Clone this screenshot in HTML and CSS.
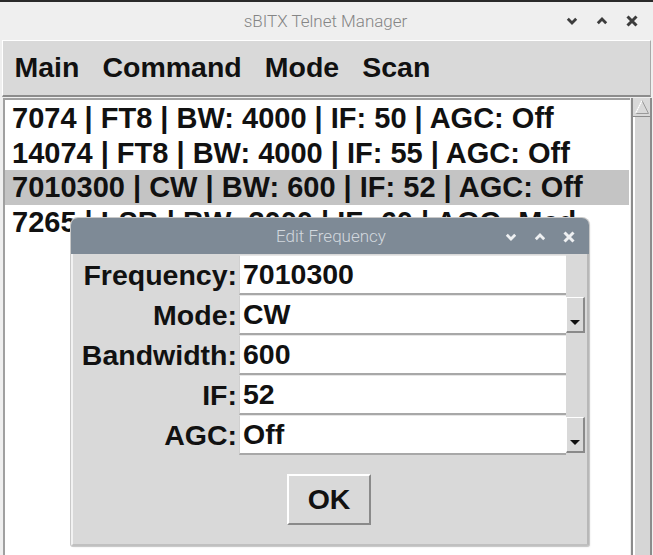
FILE: index.html
```html
<!DOCTYPE html>
<html>
<head>
<meta charset="utf-8">
<link rel="stylesheet" href="styles.css">
</head>
<body>
<div class="win">
  <div class="titlebar">
    <span class="title">sBITX Telnet Manager</span>
    <div class="ctrls">
      <svg class="ic" width="12" height="12" viewBox="0 0 12 12"><path d="M1.8 3.8 L6 8 L10.2 3.8" fill="none" stroke="currentColor" stroke-width="2.8"/></svg>
      <svg class="ic" width="12" height="12" viewBox="0 0 12 12"><path d="M1.8 8.2 L6 4 L10.2 8.2" fill="none" stroke="currentColor" stroke-width="2.8"/></svg>
      <svg class="ic" width="12" height="12" viewBox="0 0 12 12"><path d="M1.5 1.5 L10.5 10.5 M10.5 1.5 L1.5 10.5" fill="none" stroke="currentColor" stroke-width="3"/></svg>
    </div>
  </div>
  <div class="menubar">
    <span class="menu">Main</span>
    <span class="menu">Command</span>
    <span class="menu">Mode</span>
    <span class="menu">Scan</span>
  </div>
  <div class="content">
    <div class="listbox">
      <div class="row">7074 | FT8 | BW: 4000 | IF: 50 | AGC: Off</div>
      <div class="row">14074 | FT8 | BW: 4000 | IF: 55 | AGC: Off</div>
      <div class="row sel">7010300 | CW | BW: 600 | IF: 52 | AGC: Off</div>
      <div class="row">7265 | LSB | BW: 3000 | IF: 60 | AGC: Med</div>
    </div>
    <div class="scrollbar">
      <div class="sb-up">
        <svg width="16" height="16" viewBox="0 0 16 16"><path d="M8 1.5 L14.5 14.5 L1.5 14.5 Z" fill="#d9d9d9" stroke="#9a9a9a" stroke-width="1"/><path d="M8 1.5 L1.5 14.5" stroke="#ffffff" stroke-width="1.2"/></svg>
      </div>
      <div class="sb-trough"></div>
    </div>
  </div>

  <div class="dialog">
    <div class="dtitle">
      <span class="dtitle-text">Edit Frequency</span>
      <div class="ctrls dctrls">
        <svg class="ic" width="12" height="12" viewBox="0 0 12 12"><path d="M1.8 3.8 L6 8 L10.2 3.8" fill="none" stroke="currentColor" stroke-width="2.8"/></svg>
        <svg class="ic" width="12" height="12" viewBox="0 0 12 12"><path d="M1.8 8.2 L6 4 L10.2 8.2" fill="none" stroke="currentColor" stroke-width="2.8"/></svg>
        <svg class="ic" width="12" height="12" viewBox="0 0 12 12"><path d="M1.5 1.5 L10.5 10.5 M10.5 1.5 L1.5 10.5" fill="none" stroke="currentColor" stroke-width="3"/></svg>
      </div>
    </div>
    <div class="dbody">
      <div class="form">
        <label class="lbl">Frequency:</label>
        <div class="field"><div class="entry">7010300</div></div>
        <label class="lbl">Mode:</label>
        <div class="field combo"><div class="entry">CW</div><div class="cbtn"><span class="tri"></span></div></div>
        <label class="lbl">Bandwidth:</label>
        <div class="field"><div class="entry">600</div></div>
        <label class="lbl">IF:</label>
        <div class="field"><div class="entry">52</div></div>
        <label class="lbl">AGC:</label>
        <div class="field combo"><div class="entry">Off</div><div class="cbtn"><span class="tri"></span></div></div>
      </div>
      <div class="btnrow"><button class="ok">OK</button></div>
    </div>
  </div>
</div>
</body>
</html>
```

FILE: styles.css
```css
* { box-sizing: border-box; }
html, body { margin: 0; padding: 0; }
body {
  width: 653px;
  height: 555px;
  overflow: hidden;
  background: #ffffff;
  font-family: "Liberation Sans", Arial, sans-serif;
}
.win {
  position: relative;
  width: 653px;
  height: 555px;
  background: #efefef;
  border-top: 2px solid #2a2a2a;
  display: flex;
  flex-direction: column;
}
.titlebar {
  height: 38px;
  flex: none;
  display: flex;
  align-items: center;
  justify-content: center;
  position: relative;
  background: #efefef;
}
.title {
  font-family: Roboto, "Liberation Sans", sans-serif;
  font-weight: 300;
  font-size: 17px;
  color: #858585;
  margin-left: -2px;
}
.ctrls {
  position: absolute;
  right: 15px;
  top: 13px;
  display: flex;
  gap: 18px;
  color: #3c3c3c;
}
.ic { display: block; }
.menubar {
  height: 57px;
  flex: none;
  margin: 0 2px 0 2px;
  background: #d9d9d9;
  border-top: 1px solid #ffffff;
  border-left: 1px solid #ffffff;
  border-bottom: 2px solid #8c8c8c;
  border-right: 1px solid #a8a8a8;
  display: flex;
  align-items: center;
  padding-left: 0;
  padding-bottom: 2px;
}
.menu {
  font-weight: bold;
  font-size: 28.5px;
  color: #111;
  padding: 0 11.5px;
}
.content {
  flex: 1;
  display: flex;
  margin-left: 3px;
  margin-top: 1px;
  min-height: 0;
}
.listbox {
  width: 627px;
  flex: none;
  background: #ffffff;
  border-left: 2px solid #a0a0a0;
  border-top: 2px solid #a0a0a0;
  padding-top: 1px;
  padding-left: 0;
  overflow: hidden;
}
.row {
  height: 34.5px;
  line-height: 34.5px;
  font-weight: bold;
  font-size: 29px;
  color: #111;
  padding-left: 7px;
  white-space: nowrap;
  margin-right: 1px;
}
.row.sel { background: #c4c4c4; }
.scrollbar {
  width: 21px;
  flex: none;
  margin-left: 1px;
  display: flex;
  flex-direction: column;
  border-left: 2px solid #8c8c8c;
  border-right: 2px solid #8c8c8c;
  background: #d9d9d9;
}
.sb-up {
  height: 19px;
  display: flex;
  align-items: center;
  justify-content: center;
  border-bottom: 1px solid #8c8c8c;
  background: #d9d9d9;
}
.sb-trough {
  flex: 1;
  border-left: 2px solid #ffffff;
  background: #d6d6d6;
}

/* dialog */
.dialog {
  position: absolute;
  left: 71px;
  top: 216px;
  width: 518px;
  height: 328px;
  display: flex;
  flex-direction: column;
  border-radius: 7px 7px 2px 2px;
  background: #d9d9d9;
  box-shadow: 0 0 0 1px #c9c9c9, 1px 1px 2px rgba(0,0,0,0.12);
  overflow: hidden;
}
.dtitle {
  height: 36px;
  flex: none;
  background: #7e8a96;
  display: flex;
  align-items: center;
  justify-content: center;
  position: relative;
}
.dtitle-text {
  font-family: Roboto, "Liberation Sans", sans-serif;
  font-weight: 300;
  font-size: 17px;
  color: #d2d8de;
  margin-left: 2px;
}
.dctrls {
  right: 14px;
  top: 13px;
  gap: 17px;
  color: #eef0f2;
}
.dbody {
  flex: 1;
  border-left: 2px solid #f2f2f2;
  border-bottom: 2px solid #c0c0c0;
  border-right: 2px solid #b8b8b8;
  display: flex;
  flex-direction: column;
  padding-top: 1px;
}
.form {
  display: grid;
  grid-template-columns: 166px 346px;
  grid-auto-rows: 40px;
}
.lbl {
  font-weight: bold;
  font-size: 28.5px;
  color: #111;
  text-align: right;
  line-height: 40px;
  padding-right: 2px;
}
.field {
  display: flex;
  height: 40px;
  padding-right: 19px;
}
.field.combo { padding-right: 0; }
.entry {
  flex: 1;
  background: #ffffff;
  border-top: 1px solid #e6e6e6;
  border-left: 1px solid #d0d0d0;
  border-bottom: 2px solid #a8a8a8;
  font-weight: bold;
  font-size: 28.5px;
  line-height: 37px;
  color: #111;
  padding-left: 3px;
}
.cbtn {
  width: 19px;
  flex: none;
  margin: 2px 0 2px 0;
  background: #d9d9d9;
  border-top: 1px solid #ffffff;
  border-left: 1px solid #ffffff;
  border-right: 2px solid #8a8a8a;
  border-bottom: 2px solid #8a8a8a;
  display: flex;
  align-items: flex-end;
  justify-content: center;
  padding-bottom: 6px;
}
.tri {
  width: 0;
  height: 0;
  border-left: 5px solid transparent;
  border-right: 5px solid transparent;
  border-top: 5px solid #111;
}
.btnrow {
  display: flex;
  justify-content: center;
  padding-top: 19px;
  padding-right: 2px;
}
.ok {
  width: 84px;
  height: 51px;
  background: #d9d9d9;
  border-top: 2px solid #ffffff;
  border-left: 2px solid #ffffff;
  border-right: 2px solid #8a8a8a;
  border-bottom: 2px solid #8a8a8a;
  font-family: "Liberation Sans", Arial, sans-serif;
  font-weight: bold;
  font-size: 28.5px;
  color: #111;
  padding: 0;
}
```
